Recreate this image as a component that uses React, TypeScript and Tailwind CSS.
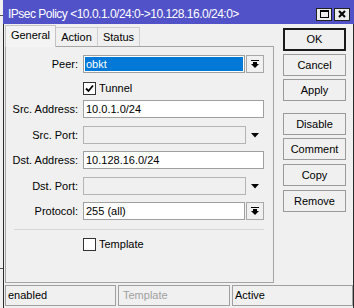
import type { ReactNode } from 'react';

function DropIcon() {
  return (
    <svg width="8" height="8" viewBox="0 0 8 8" fill="#000">
      <rect x="0" y="0" width="8" height="1" />
      <rect x="2" y="2" width="4" height="2" />
      <path d="M0 4H8L4 8Z" />
    </svg>
  );
}

function Arrow() {
  return (
    <svg width="8" height="5" viewBox="0 0 8 5" fill="#000">
      <path d="M0 0H8L4 4.5Z" />
    </svg>
  );
}

function CheckBox({ checked }: { checked?: boolean }) {
  return (
    <div className="w-[13px] h-[13px] bg-white border border-[#333] flex items-center justify-center">
      {checked && (
        <svg width="9" height="9" viewBox="0 0 9 9">
          <path d="M1 4.5L3.5 7L8 1.5" stroke="#000" strokeWidth="1.8" fill="none" />
        </svg>
      )}
    </div>
  );
}

function Row({ label, children, className }: { label: string; children: ReactNode; className: string }) {
  return (
    <div className={className}>
      <div className="w-[72px] text-right">{label}</div>
      <div className="ml-[5px] flex items-center">{children}</div>
    </div>
  );
}

function Btn({ children, className }: { children: ReactNode; className: string }) {
  return <div className={className}>{children}</div>;
}

export default function App() {
  return (
    <div className="w-[354px] h-[308px] bg-[#f0f0f0] flex overflow-hidden text-[11px] text-black font-['Liberation_Sans',Arial,sans-serif]">
      {/* window behind */}
      <div className="w-[3px] shrink-0 flex flex-col">
        <div className="h-[16px] border-b border-[#555]" />
        <div className="h-[253px] border-b border-[#555]" />
      </div>

      <div className="flex-1 flex flex-col">
        {/* title bar */}
        <div className="h-[24px] shrink-0 bg-[#5252c8] flex items-center pt-[4px] pl-[5px] pr-[4px]">
          <div className="flex-1 text-white text-[12px] tracking-[-0.5px] leading-none">
            {'IPsec Policy <10.0.1.0/24:0->10.128.16.0/24:0>'}
          </div>
          <div className="w-[16px] h-[13px] bg-[#ececec] border border-[#222] flex items-center justify-center">
            <div className="w-[9px] h-[8px] border border-black border-t-2" />
          </div>
          <div className="ml-[2px] w-[16px] h-[13px] bg-[#ececec] border border-[#222] flex items-center justify-center">
            <svg width="8" height="8" viewBox="0 0 8 8">
              <path d="M1 1L7 7M7 1L1 7" stroke="#000" strokeWidth="2" />
            </svg>
          </div>
        </div>

        {/* body */}
        <div className="flex-1 flex flex-col border-l border-r border-[#2a2a2a]">
          <div className="flex">
            {/* tabs + panel */}
            <div className="pl-[1px] pt-[1px] flex flex-col">
              <div className="h-[21px] flex items-end">
                <div className="relative z-10 -mb-px w-[51px] h-[22px] bg-[#f4f4f4] border-l border-t border-r border-[#c4c4c4] flex items-center justify-center pb-[2px]">
                  General
                </div>
                <div className="w-[42px] h-[19px] bg-[#f0f0f0] border-t border-r border-[#cfcfcf] flex items-center justify-center">
                  Action
                </div>
                <div className="w-[42px] h-[19px] bg-[#f0f0f0] border-t border-r border-[#cfcfcf] flex items-center justify-center">
                  Status
                </div>
              </div>
              <div className="w-[269px] h-[237px] border border-[#a5a5a5] pt-[8px] flex flex-col">
                <Row label="Peer:" className="flex items-center h-[18px]">
                  <div className="w-[162px] h-[18px] border border-[#a0a0a0] bg-white p-[1px]">
                    <div className="h-full bg-[#0078d7] text-white pl-[1px] flex items-center">obkt</div>
                  </div>
                  <div className="ml-[1px] w-[18px] h-[18px] border border-[#a8a8a8] flex items-center justify-center">
                    <DropIcon />
                  </div>
                </Row>
                <Row label="" className="flex items-center h-[13px] mt-[9px]">
                  <CheckBox checked />
                  <span className="ml-[3px]">Tunnel</span>
                </Row>
                <Row label="Src. Address:" className="flex items-center h-[18px] mt-[5px]">
                  <div className="w-[181px] h-[18px] border border-[#a0a0a0] bg-white pl-[2px] flex items-center">10.0.1.0/24</div>
                </Row>
                <Row label="Src. Port:" className="flex items-center h-[18px] mt-[8px]">
                  <div className="w-[163px] h-[18px] border border-[#b4b4b4] bg-[#f0f0f0]" />
                  <div className="w-[18px] flex items-center justify-center">
                    <Arrow />
                  </div>
                </Row>
                <Row label="Dst. Address:" className="flex items-center h-[18px] mt-[7px]">
                  <div className="w-[181px] h-[18px] border border-[#a0a0a0] bg-white pl-[2px] flex items-center">10.128.16.0/24</div>
                </Row>
                <Row label="Dst. Port:" className="flex items-center h-[18px] mt-[8px]">
                  <div className="w-[163px] h-[18px] border border-[#b4b4b4] bg-[#f0f0f0]" />
                  <div className="w-[18px] flex items-center justify-center">
                    <Arrow />
                  </div>
                </Row>
                <Row label="Protocol:" className="flex items-center h-[18px] mt-[7px]">
                  <div className="w-[162px] h-[18px] border border-[#a0a0a0] bg-white pl-[2px] flex items-center">255 (all)</div>
                  <div className="ml-[1px] w-[18px] h-[18px] border border-[#a8a8a8] flex items-center justify-center">
                    <DropIcon />
                  </div>
                </Row>
                <div className="mt-[9px] ml-[8px] w-[250px] border-t border-[#d6d6d6]" />
                <Row label="" className="flex items-center h-[13px] mt-[8px]">
                  <CheckBox />
                  <span className="ml-[3px]">Template</span>
                </Row>
              </div>
            </div>

            {/* buttons */}
            <div className="ml-[9px] pt-[4px] w-[63px] flex flex-col text-[11px]">
              <Btn className="h-[23px] border-2 border-[#1a1a1a] flex items-center justify-center">OK</Btn>
              <Btn className="mt-[3px] h-[22px] border border-[#9a9a9a] flex items-center justify-center">Cancel</Btn>
              <Btn className="mt-[3px] h-[22px] border border-[#9a9a9a] flex items-center justify-center">Apply</Btn>
              <Btn className="mt-[12px] h-[22px] border border-[#9a9a9a] flex items-center justify-center">Disable</Btn>
              <Btn className="mt-[3px] h-[22px] border border-[#9a9a9a] flex items-center justify-center">Comment</Btn>
              <Btn className="mt-[4px] h-[22px] border border-[#9a9a9a] flex items-center justify-center">Copy</Btn>
              <Btn className="mt-[4px] h-[22px] border border-[#9a9a9a] flex items-center justify-center">Remove</Btn>
            </div>
          </div>

          {/* status bar */}
          <div className="mt-[2px] pl-[1px] flex gap-[2px] h-[21px]">
            <div className="w-[111px] border border-[#a0a0a0] pl-[2px] flex items-center">enabled</div>
            <div className="w-[112px] border border-[#a0a0a0] pl-[4px] flex items-center text-[#a0a0a0]">Template</div>
            <div className="flex-1 border border-[#a0a0a0] pl-[2px] flex items-center">Active</div>
          </div>
        </div>
      </div>
    </div>
  );
}
